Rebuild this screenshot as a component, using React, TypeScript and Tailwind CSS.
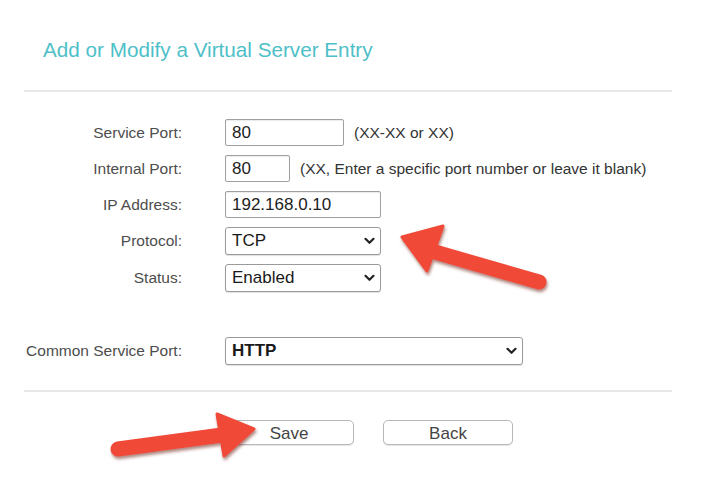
import React from "react";

function Chevron() {
  return (
    <svg width="11" height="8" viewBox="0 0 11 8" className="pointer-events-none absolute right-[6px] top-1/2 -translate-y-1/2">
      <path d="M1.5 1.8 L5.5 5.8 L9.5 1.8" fill="none" stroke="#222" strokeWidth="2.2" strokeLinecap="round" strokeLinejoin="round" />
    </svg>
  );
}

function TextBox({ value, width }: { value: string; width: string }) {
  return (
    <input
      readOnly
      value={value}
      className={`${width} h-[27px] rounded-[2px] border border-[#a0a0a0] bg-white px-[6px] text-[17px] text-[#222] shadow-[inset_0_1px_1px_rgba(0,0,0,0.08)] outline-none`}
    />
  );
}

function SelectBox({ value, width, bold }: { value: string; width: string; bold?: boolean }) {
  return (
    <div className={`relative ${width} h-[28px]`}>
      <select
        defaultValue={value}
        className={`h-full w-full appearance-none rounded-[3px] border border-[#9a9a9a] bg-white pl-[6px] text-[17px] text-[#1a1a1a] shadow-[0_1px_1px_rgba(0,0,0,0.12)] outline-none ${bold ? "font-bold" : "font-medium"}`}
      >
        <option>{value}</option>
      </select>
      <Chevron />
    </div>
  );
}

function Label({ children }: { children: React.ReactNode }) {
  return <span className="text-right text-[15.5px] text-[#4d4d4d]">{children}</span>;
}

function Arrows() {
  return (
    <svg width="720" height="485" className="pointer-events-none absolute left-0 top-0">
      <defs>
        <filter id="sh" x="-20%" y="-20%" width="140%" height="160%">
          <feDropShadow dx="1" dy="2.5" stdDeviation="1.8" floodColor="#6b1a10" floodOpacity="0.55" />
        </filter>
      </defs>
      <g filter="url(#sh)" fill="#f04a38" stroke="#f04a38">
        <line x1="539" y1="282" x2="428" y2="250" strokeWidth="15" strokeLinecap="round" />
        <polygon points="402,237 443,226 427,271" strokeWidth="3" strokeLinejoin="round" />
        <line x1="118" y1="449" x2="222" y2="435" strokeWidth="15" strokeLinecap="round" />
        <polygon points="254,429 217,414 224,456" strokeWidth="3" strokeLinejoin="round" />
      </g>
    </svg>
  );
}

export default function App() {
  return (
    <div className="relative h-[485px] w-[720px] overflow-hidden bg-white font-['Liberation_Sans',Arial,sans-serif]">
      <h1 className="pl-[43px] pt-[38px] text-[20.7px] leading-[24px] text-[#4dc0c8]">
        Add or Modify a Virtual Server Entry
      </h1>
      <div className="ml-[24px] mt-[28px] h-[2px] w-[648px] bg-[#e8e8e8]" />

      <div className="mt-[27px] grid grid-cols-[182px_auto] items-center gap-x-[43px] gap-y-[9px]">
        <Label>Service Port:</Label>
        <div className="flex items-center gap-[10px]">
          <TextBox value="80" width="w-[119px]" />
          <span className="text-[15.5px] text-[#333]">(XX-XX or XX)</span>
        </div>
        <Label>Internal Port:</Label>
        <div className="flex items-center gap-[10px]">
          <TextBox value="80" width="w-[65px]" />
          <span className="text-[15.5px] text-[#333]">(XX, Enter a specific port number or leave it blank)</span>
        </div>
        <Label>IP Address:</Label>
        <TextBox value="192.168.0.10" width="w-[156px]" />
        <Label>Protocol:</Label>
        <SelectBox value="TCP" width="w-[156px]" />
        <Label>Status:</Label>
        <SelectBox value="Enabled" width="w-[156px]" />
      </div>

      <div className="mt-[45px] grid grid-cols-[182px_auto] items-center gap-x-[43px]">
        <span className="text-right text-[15.5px] text-[#4d4d4d]">Common Service Port:</span>
        <SelectBox value="HTTP" width="w-[298px]" bold />
      </div>

      <div className="ml-[24px] mt-[25px] h-[2px] w-[648px] bg-[#e8e8e8]" />

      <div className="mt-[28px] flex gap-[29px] pl-[224px]">
        <button className="h-[25px] w-[130px] rounded-[5px] border border-[#b8b8b8] bg-white text-[17px] text-[#444] shadow-[0_1px_1px_rgba(0,0,0,0.1)]">
          Save
        </button>
        <button className="h-[25px] w-[130px] rounded-[5px] border border-[#b8b8b8] bg-white text-[17px] text-[#444] shadow-[0_1px_1px_rgba(0,0,0,0.1)]">
          Back
        </button>
      </div>

      <Arrows />
    </div>
  );
}
